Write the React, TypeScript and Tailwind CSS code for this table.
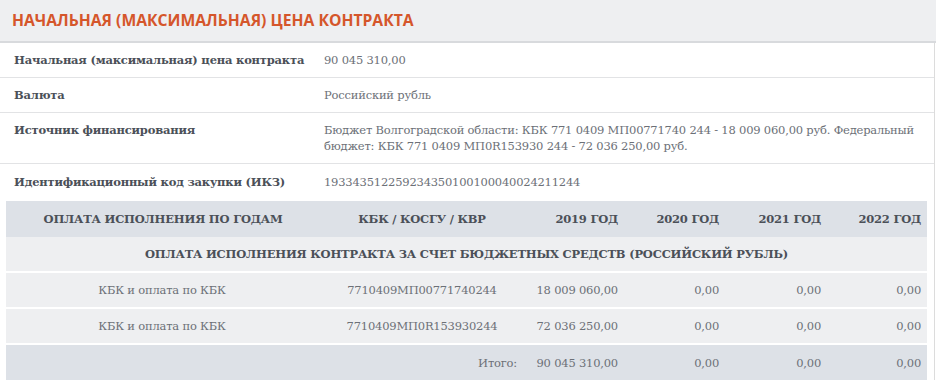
import React from "react";

const slab = { fontFamily: '"DejaVu Serif", "Liberation Serif", serif' };

const info = [
  { label: "Начальная (максимальная) цена контракта", value: "90 045 310,00" },
  { label: "Валюта", value: "Российский рубль" },
  {
    label: "Источник финансирования",
    value:
      "Бюджет Волгоградской области: КБК 771 0409 МП00771740 244 - 18 009 060,00 руб. Федеральный бюджет: КБК 771 0409 МП0R153930 244 - 72 036 250,00 руб.",
  },
  { label: "Идентификационный код закупки (ИКЗ)", value: "193343512259234350100100040024211244" },
];

const rows = [
  { name: "КБК и оплата по КБК", kbk: "7710409МП00771740244", sums: ["18 009 060,00", "0,00", "0,00", "0,00"] },
  { name: "КБК и оплата по КБК", kbk: "7710409МП0R153930244", sums: ["72 036 250,00", "0,00", "0,00", "0,00"] },
];

const cols = "grid grid-cols-[312px_208px_102px_101px_102px_96px]";

export default function App() {
  return (
    <div className="w-[936px] h-[380px] overflow-hidden bg-white">
      <div className="h-[43px] bg-[#eeeff1] border-b-2 border-[#d8dadd] px-3 flex items-center">
        <h1
          className="text-[15.7px] font-bold text-[#d5562b]"
          style={{ fontFamily: '"Open Sans", "Noto Sans", sans-serif' }}
        >
          НАЧАЛЬНАЯ (МАКСИМАЛЬНАЯ) ЦЕНА КОНТРАКТА
        </h1>
      </div>

      <div
        className="w-[935px] border-r border-[#dcdcdc] text-[11.5px] leading-[16px] tracking-[-0.2px]"
        style={slab}
      >
        {info.map((r, i) => (
          <div
            key={i}
            className={`flex px-[14px] ${i < info.length - 1 ? "py-[9px] border-b border-[#e2e3e5]" : "pt-[10px] pb-[11px]"}`}
          >
            <div className="w-[310px] shrink-0 font-bold text-[#4b5058]">{r.label}</div>
            <div className="flex-1 text-[#6c7077] pr-[4px]">{r.value}</div>
          </div>
        ))}

        <div className="ml-[6px] w-[921px]">
          <div className={`${cols} h-[36px] items-center bg-[#dde1e7] font-bold text-[#4b5058]`}>
            <div className="text-center pl-[2px]">ОПЛАТА ИСПОЛНЕНИЯ ПО ГОДАМ</div>
            <div className="text-center">КБК / КОСГУ / КВР</div>
            <div className="text-right pr-[10px]">2019 ГОД</div>
            <div className="text-right pr-[10px]">2020 ГОД</div>
            <div className="text-right pr-[10px]">2021 ГОД</div>
            <div className="text-right pr-[6px]">2022 ГОД</div>
          </div>
          <div className="h-[36px] flex items-center justify-center bg-[#eeeff1] font-bold text-[#4b5058] border-b-2 border-white">
            ОПЛАТА ИСПОЛНЕНИЯ КОНТРАКТА ЗА СЧЕТ БЮДЖЕТНЫХ СРЕДСТВ (РОССИЙСКИЙ РУБЛЬ)
          </div>
          {rows.map((r, i) => (
            <div
              key={i}
              className={`${cols} h-[36px] items-center bg-[#eeeff1] text-[#6c7077] border-b-2 border-white`}
            >
              <div className="text-center">{r.name}</div>
              <div className="text-center">{r.kbk}</div>
              {r.sums.map((s, j) => (
                <div key={j} className={`text-right ${j === 3 ? "pr-[6px]" : "pr-[10px]"}`}>
                  {s}
                </div>
              ))}
            </div>
          ))}
          <div className={`${cols} h-[36px] items-center bg-[#dde1e7] text-[#6c7077]`}>
            <div />
            <div className="text-right pr-[9px]">Итого:</div>
            <div className="text-right pr-[10px]">90 045 310,00</div>
            <div className="text-right pr-[10px]">0,00</div>
            <div className="text-right pr-[10px]">0,00</div>
            <div className="text-right pr-[6px]">0,00</div>
          </div>
        </div>
      </div>
    </div>
  );
}
